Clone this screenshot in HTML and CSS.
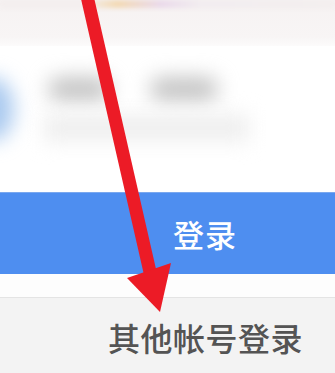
FILE: index.html
```html
<!DOCTYPE html>
<html>
    <head>
        <meta charset="utf-8">
        <title>登录</title>
        <link rel="stylesheet" href="styles.css">
    </head>
    <body>
        <main class="screen">
            <div class="top">
                <div class="strip"></div>
            </div>
            <div class="account">
                <div class="avatar"></div>
                <div class="lines">
                    <div class="line_main">
                        <span class="blob"></span>
                        <span class="blob wide"></span>
                    </div>
                    <div class="line_sub"></div>
                </div>
            </div>
            <div class="login_btn">登录</div>
            <div class="gap"></div>
            <div class="other">其他帐号登录</div>

            <svg class="arrow" width="335" height="373" viewBox="0 0 335 373">
                <line x1="87" y1="-4" x2="150" y2="272" stroke="#ec1b26" stroke-width="13"/>
                <polygon points="127,278 171,263 160,312" fill="#ec1b26"/>
            </svg>
        </main>
    </body>
</html>
```

FILE: styles.css
```css
* {
    box-sizing: border-box;
}

body {
    margin: 0;
    font-family: "Noto Sans CJK SC", "Noto Sans", sans-serif;
    background: #fff;
}

.screen {
    position: relative;
    width: 335px;
    height: 373px;
    overflow: hidden;
}

.top {
    height: 46px;
    background: linear-gradient(#f6f2f2, #f8f5f5 80%, #fcfbfb);
}

.strip {
    height: 8px;
    background: linear-gradient(90deg, #f3eeee 25%, #f2d9b4 35%, #ead9ea 48%, #f1ecef 60%, #f3eeee);
    filter: blur(2px);
}

.account {
    display: flex;
    align-items: center;
    height: 146px;
    padding-bottom: 20px;
}

.avatar {
    width: 44px;
    height: 64px;
    margin-left: -30px;
    border-radius: 50%;
    background: #a9c9ef;
    filter: blur(10px);
}

.lines {
    margin-left: 30px;
    display: flex;
    flex-direction: column;
    gap: 14px;
}

.line_main {
    display: flex;
    gap: 40px;
    padding: 0 4px;
}

.blob {
    width: 62px;
    height: 24px;
    background: #c4c4c4;
    border-radius: 12px;
    filter: blur(10px);
}

.blob.wide {
    width: 68px;
}

.line_sub {
    width: 205px;
    height: 26px;
    background: #eeeeee;
    filter: blur(10px);
}

.login_btn {
    height: 82px;
    display: flex;
    align-items: center;
    justify-content: center;
    padding-left: 75px;
    background: #4e8ef0;
    border-top: 1px solid #7aa8ef;
    color: #fff;
    font-size: 31px;
    font-weight: 500;
    letter-spacing: 1px;
}

.gap {
    height: 23px;
    background: #fdfdfd;
}

.other {
    height: 76px;
    padding: 16px 0 0 108px;
    background: #f3f3f3;
    border-top: 1px solid #e4e4e4;
    color: #545454;
    font-size: 32px;
    font-weight: 500;
    letter-spacing: 0.5px;
}

.arrow {
    position: absolute;
    left: 0;
    top: 0;
}
```
